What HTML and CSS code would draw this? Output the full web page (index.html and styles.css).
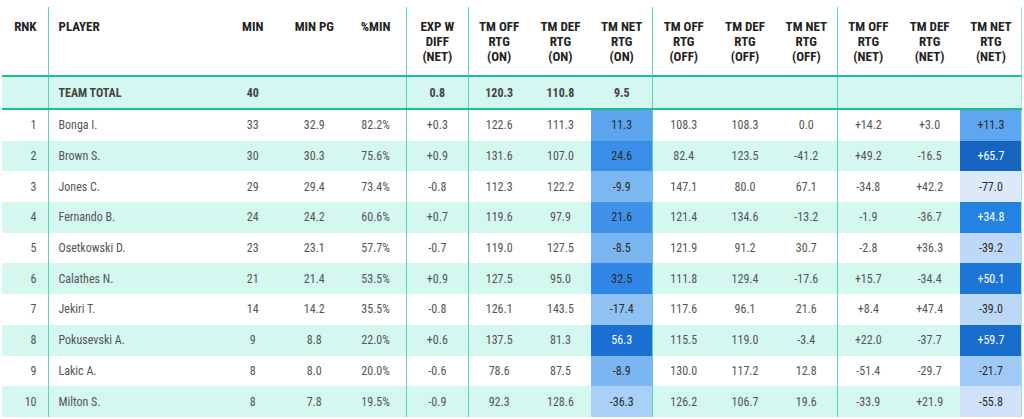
FILE: index.html
```html
<!DOCTYPE html>
<html>
<head>
<meta charset="utf-8">
<link rel="stylesheet" href="styles.css">
</head>
<body>
<table class="stats">
  <colgroup>
    <col class="c-rnk"><col class="c-player">
    <col class="c-num"><col class="c-num"><col class="c-num"><col class="c-num">
    <col class="c-num"><col class="c-num"><col class="c-num">
    <col class="c-num"><col class="c-num"><col class="c-num">
    <col class="c-num"><col class="c-num"><col class="c-num">
  </colgroup>
  <thead>
    <tr>
      <th class="rnk">RNK</th>
      <th class="player">PLAYER</th>
      <th>MIN</th>
      <th>MIN PG</th>
      <th>%MIN</th>
      <th class="sep">EXP W<br>DIFF<br>(NET)</th>
      <th class="sep">TM OFF<br>RTG<br>(ON)</th>
      <th>TM DEF<br>RTG<br>(ON)</th>
      <th>TM NET<br>RTG<br>(ON)</th>
      <th class="sep">TM OFF<br>RTG<br>(OFF)</th>
      <th>TM DEF<br>RTG<br>(OFF)</th>
      <th>TM NET<br>RTG<br>(OFF)</th>
      <th class="sep">TM OFF<br>RTG<br>(NET)</th>
      <th>TM DEF<br>RTG<br>(NET)</th>
      <th class="last">TM NET<br>RTG<br>(NET)</th>
    </tr>
  </thead>
  <tbody>
    <tr class="total">
      <td class="rnk"></td>
      <td class="player">TEAM TOTAL</td>
      <td>40</td><td></td><td></td>
      <td class="sep">0.8</td>
      <td class="sep">120.3</td><td>110.8</td><td>9.5</td>
      <td class="sep"></td><td></td><td></td>
      <td class="sep"></td><td></td><td class="last"></td>
    </tr>
    <tr>
      <td class="rnk">1</td><td class="player">Bonga I.</td>
      <td>33</td><td>32.9</td><td>82.2%</td>
      <td class="sep">+0.3</td>
      <td class="sep">122.6</td><td>111.3</td><td class="heat" style="background:#5ba5ef">11.3</td>
      <td class="sep">108.3</td><td>108.3</td><td>0.0</td>
      <td class="sep">+14.2</td><td>+3.0</td><td class="heat last" style="background:#5ea6ef">+11.3</td>
    </tr>
    <tr class="alt">
      <td class="rnk">2</td><td class="player">Brown S.</td>
      <td>30</td><td>30.3</td><td>75.6%</td>
      <td class="sep">+0.9</td>
      <td class="sep">131.6</td><td>107.0</td><td class="heat" style="background:#3a8ee8">24.6</td>
      <td class="sep">82.4</td><td>123.5</td><td>-41.2</td>
      <td class="sep">+49.2</td><td>-16.5</td><td class="heat light last" style="background:#1565c0">+65.7</td>
    </tr>
    <tr>
      <td class="rnk">3</td><td class="player">Jones C.</td>
      <td>29</td><td>29.4</td><td>73.4%</td>
      <td class="sep">-0.8</td>
      <td class="sep">112.3</td><td>122.2</td><td class="heat" style="background:#7db7f1">-9.9</td>
      <td class="sep">147.1</td><td>80.0</td><td>67.1</td>
      <td class="sep">-34.8</td><td>+42.2</td><td class="heat last" style="background:#dce9fa">-77.0</td>
    </tr>
    <tr class="alt">
      <td class="rnk">4</td><td class="player">Fernando B.</td>
      <td>24</td><td>24.2</td><td>60.6%</td>
      <td class="sep">+0.7</td>
      <td class="sep">119.6</td><td>97.9</td><td class="heat" style="background:#3f91e9">21.6</td>
      <td class="sep">121.4</td><td>134.6</td><td>-13.2</td>
      <td class="sep">-1.9</td><td>-36.7</td><td class="heat light last" style="background:#2383e2">+34.8</td>
    </tr>
    <tr>
      <td class="rnk">5</td><td class="player">Osetkowski D.</td>
      <td>23</td><td>23.1</td><td>57.7%</td>
      <td class="sep">-0.7</td>
      <td class="sep">119.0</td><td>127.5</td><td class="heat" style="background:#7ab5f0">-8.5</td>
      <td class="sep">121.9</td><td>91.2</td><td>30.7</td>
      <td class="sep">-2.8</td><td>+36.3</td><td class="heat last" style="background:#bed9f7">-39.2</td>
    </tr>
    <tr class="alt">
      <td class="rnk">6</td><td class="player">Calathes N.</td>
      <td>21</td><td>21.4</td><td>53.5%</td>
      <td class="sep">+0.9</td>
      <td class="sep">127.5</td><td>95.0</td><td class="heat" style="background:#2f86e4">32.5</td>
      <td class="sep">111.8</td><td>129.4</td><td>-17.6</td>
      <td class="sep">+15.7</td><td>-34.4</td><td class="heat light last" style="background:#1d76d6">+50.1</td>
    </tr>
    <tr>
      <td class="rnk">7</td><td class="player">Jekiri T.</td>
      <td>14</td><td>14.2</td><td>35.5%</td>
      <td class="sep">-0.8</td>
      <td class="sep">126.1</td><td>143.5</td><td class="heat" style="background:#8fc1f3">-17.4</td>
      <td class="sep">117.6</td><td>96.1</td><td>21.6</td>
      <td class="sep">+8.4</td><td>+47.4</td><td class="heat last" style="background:#bcd8f7">-39.0</td>
    </tr>
    <tr class="alt">
      <td class="rnk">8</td><td class="player">Pokusevski A.</td>
      <td>9</td><td>8.8</td><td>22.0%</td>
      <td class="sep">+0.6</td>
      <td class="sep">137.5</td><td>81.3</td><td class="heat light" style="background:#1a6fd3">56.3</td>
      <td class="sep">115.5</td><td>119.0</td><td>-3.4</td>
      <td class="sep">+22.0</td><td>-37.7</td><td class="heat light last" style="background:#186ccb">+59.7</td>
    </tr>
    <tr>
      <td class="rnk">9</td><td class="player">Lakic A.</td>
      <td>8</td><td>8.0</td><td>20.0%</td>
      <td class="sep">-0.6</td>
      <td class="sep">78.6</td><td>87.5</td><td class="heat" style="background:#7cb6f0">-8.9</td>
      <td class="sep">130.0</td><td>117.2</td><td>12.8</td>
      <td class="sep">-51.4</td><td>-29.7</td><td class="heat last" style="background:#a0caf5">-21.7</td>
    </tr>
    <tr class="alt">
      <td class="rnk">10</td><td class="player">Milton S.</td>
      <td>8</td><td>7.8</td><td>19.5%</td>
      <td class="sep">-0.9</td>
      <td class="sep">92.3</td><td>128.6</td><td class="heat" style="background:#a9d0f6">-36.3</td>
      <td class="sep">126.2</td><td>106.7</td><td>19.6</td>
      <td class="sep">-33.9</td><td>+21.9</td><td class="heat last" style="background:#cfe2f9">-55.8</td>
    </tr>
  </tbody>
</table>
</body>
</html>
```

FILE: styles.css
```css
html, body {
  margin: 0;
  padding: 0;
  background: #ffffff;
}

body {
  font-family: Roboto, "Liberation Sans", sans-serif;
  font-stretch: condensed;
}

.stats {
  margin: 7px 0 0 2px;
  width: 1020px;
  border-collapse: collapse;
  table-layout: fixed;
  font-size: 12px;
  color: #555555;
}

.c-rnk { width: 46px; }
.c-player { width: 174px; }
.c-num { width: 61.54px; }

.stats th {
  height: 69px;
  box-sizing: border-box;
  padding: 12px 2px 0;
  vertical-align: top;
  font-size: 13px;
  line-height: 15px;
  font-weight: 700;
  color: #222222;
  text-align: center;
}

.stats th.rnk,
.stats td.rnk {
  text-align: right;
  padding-right: 11px;
}

.stats th.player,
.stats td.player {
  text-align: left;
  padding-left: 10px;
  border-left: 1px solid #5fd3b6;
}

.stats .sep {
  border-left: 1px solid #5fd3b6;
}

.stats .last {
  border-right: 1px solid #9fe5d3;
}

.stats td {
  height: 30.7px;
  padding: 0 2px;
  text-align: center;
  vertical-align: middle;
  white-space: nowrap;
}

.stats tr.alt td {
  background: #d4f7ef;
}

.stats tr.total td {
  height: 31px;
  background: #d4f7ef;
  border-top: 2px solid #1fbd98;
  border-bottom: 2px solid #1fbd98;
  font-weight: 700;
  color: #444444;
}

.stats td.heat {
  color: #2b2b2b;
}

.stats td.heat.light {
  color: #ffffff;
}
```
